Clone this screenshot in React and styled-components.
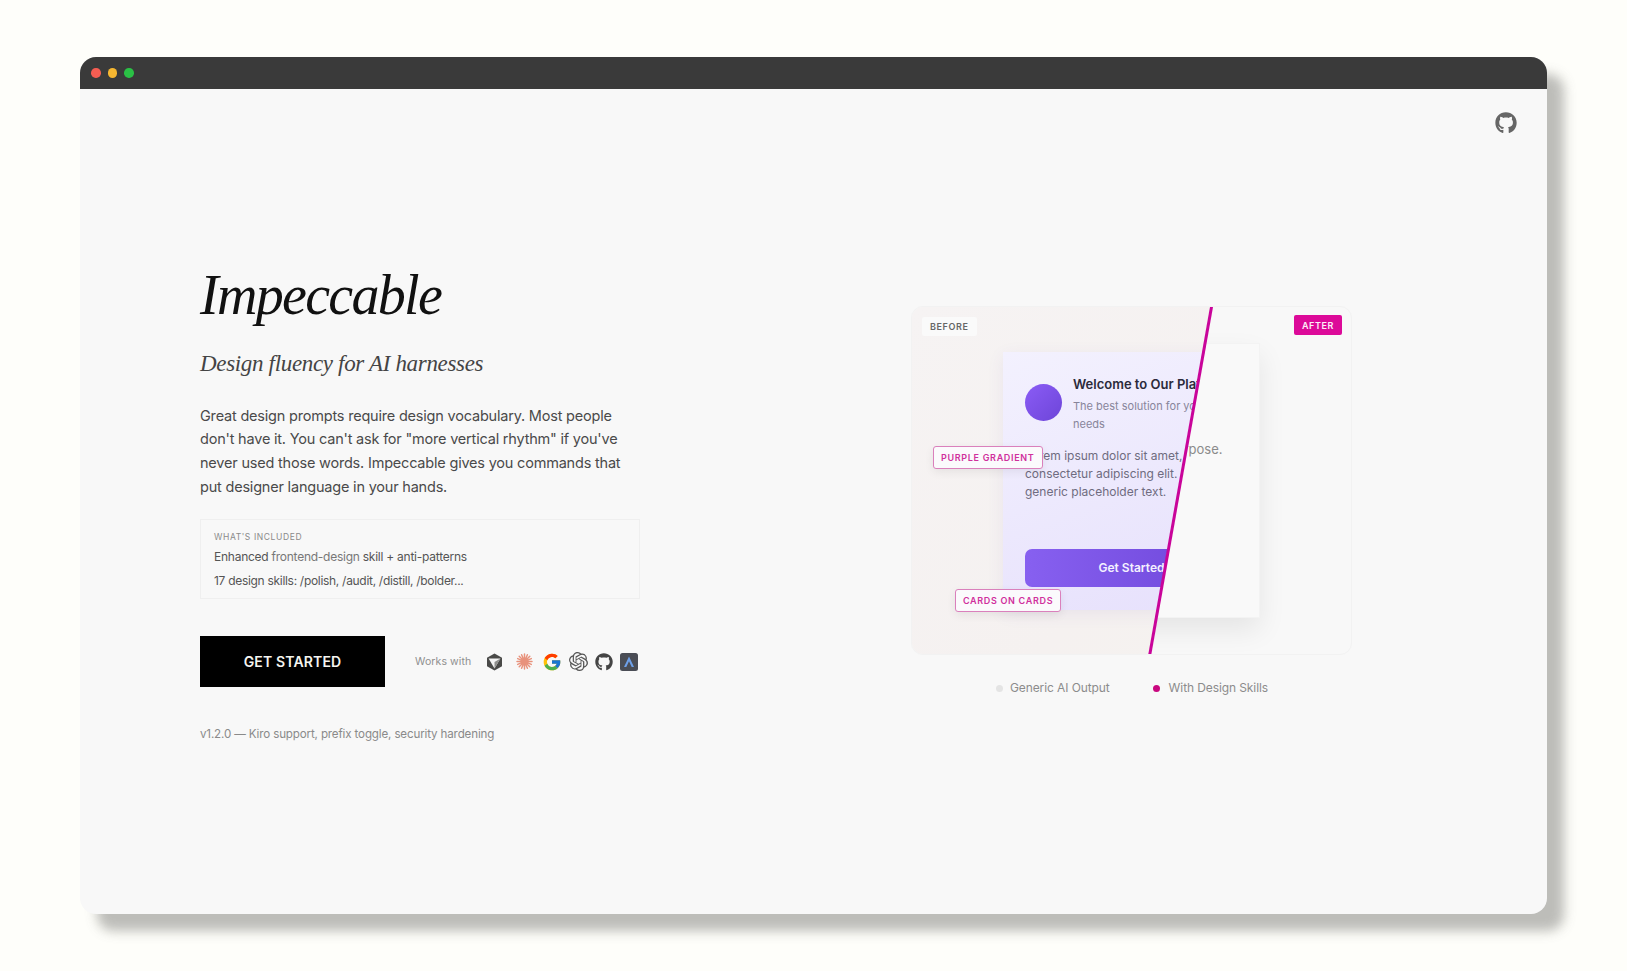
import React from "react";
import styled, { createGlobalStyle } from "styled-components";
import { FaGithub } from "react-icons/fa";
import { FcGoogle } from "react-icons/fc";
import { SiOpenai } from "react-icons/si";

const Global = createGlobalStyle`
  html, body {
    margin: 0;
    background: #fefefa;
  }
  * {
    box-sizing: border-box;
  }
`;

const Page = styled.div`
  padding: 57px 80px;
  min-height: 971px;
  overflow: hidden;
`;
const Window = styled.div`
  width: 1467px;
  height: 857px;
  border-radius: 16px;
  background: #f8f8f8;
  box-shadow: 17px 17px 12px rgba(100, 100, 95, 0.42);
  display: flex;
  flex-direction: column;
  position: relative;
`;
const TitleBar = styled.div`
  height: 32px;
  flex: none;
  background: #3a3a3a;
  border-radius: 16px 16px 0 0;
  display: flex;
  align-items: center;
  gap: 7px;
  padding-left: 11px;
`;
const Light = styled.span`
  width: 9.5px;
  height: 9.5px;
  border-radius: 50%;
  background: ${({ $color }) => $color};
`;
const GithubLink = styled.a`
  position: absolute;
  top: 55px;
  right: 30px;
  color: #666;
  font-size: 22px;
  line-height: 0;
`;
const Main = styled.main`
  flex: 1;
  display: flex;
  align-items: center;
  justify-content: space-between;
  padding: 0 195px 0 120px;
  font-family: Inter, sans-serif;
`;
const Intro = styled.section`
  width: 440px;
`;
const Title = styled.h1`
  margin: 0;
  font-family: "Liberation Serif", serif;
  font-style: italic;
  font-weight: 400;
  font-size: 56px;
  line-height: 70px;
  letter-spacing: -1.7px;
  color: #111;
`;
const Tagline = styled.h2`
  margin: 18px 0 0;
  font-family: "Liberation Serif", serif;
  font-style: italic;
  font-weight: 400;
  font-size: 23px;
  line-height: 32px;
  letter-spacing: -0.33px;
  color: #444;
`;
const Lead = styled.p`
  margin: 24px 0 0;
  font-size: 14.5px;
  line-height: 23.6px;
  letter-spacing: -0.2px;
  color: #4a4a4a;
`;
const Included = styled.div`
  margin-top: 21px;
  height: 80px;
  border: 1px solid #efefef;
  padding: 11px 13px;
`;
const IncludedLabel = styled.div`
  font-size: 8.5px;
  line-height: 12px;
  letter-spacing: 0.6px;
  color: #8a8a8a;
`;
const IncludedRow = styled.div`
  margin-top: ${({ $first }) => ($first ? "4px" : "5px")};
  font-size: 12px;
  line-height: 19px;
  letter-spacing: ${({ $first }) => ($first ? "-0.25px" : "-0.3px")};
  color: #555;
`;
const Code = styled.span`
  color: #777;
`;
const Actions = styled.div`
  margin-top: 37px;
  display: flex;
  align-items: center;
`;
const Cta = styled.button`
  width: 185px;
  height: 51px;
  flex: none;
  border: 0;
  background: #000;
  color: #f5f5f0;
  font-family: Inter, sans-serif;
  font-size: 14px;
  font-weight: 600;
  letter-spacing: 0.15px;
`;
const WorksWith = styled.span`
  margin-left: 30px;
  flex: none;
  white-space: nowrap;
  font-size: 10.5px;
  letter-spacing: 0.1px;
  color: #8f8f8f;
`;
const Harnesses = styled.div`
  margin-left: 15px;
  flex: none;
  display: flex;
  align-items: center;
  gap: 7px;
  line-height: 0;
`;
const Version = styled.p`
  margin: 38px 0 0;
  font-size: 11.6px;
  line-height: 18px;
  letter-spacing: -0.15px;
  color: #8a8a8a;
`;

const Showcase = styled.section`
  width: 441px;
`;
const Compare = styled.div`
  position: relative;
  height: 349px;
  border-radius: 12px;
  border: 1px solid #f2f2f2;
  background: #f8f8f8;
  overflow: hidden;
`;
const Layer = styled.div`
  position: absolute;
  inset: 0;
  display: flex;
  align-items: center;
  justify-content: center;
`;
const BeforeLayer = styled(Layer)`
  background: linear-gradient(135deg, #f6f3f3, #f5f1f0 60%, #f5f3ef);
  clip-path: polygon(0 0, 68% 0, 54% 100%, 0 100%);
`;
const AfterCard = styled.div`
  width: 256px;
  height: 275px;
  background: #f9f9f9;
  border: 1px solid #f3f3f3;
  box-shadow: 0 12px 26px rgba(0, 0, 0, 0.08);
  padding: 96px 6px 0;
  font-size: 13px;
  line-height: 18px;
  color: #8b8b8b;
  white-space: nowrap;
`;
const BeforeCard = styled.div`
  width: 257px;
  height: 258px;
  background: linear-gradient(160deg, #f3f1fe, #e6e0fc);
  box-shadow: 0 4px 16px rgba(90, 70, 160, 0.08);
  padding: 33px 22px 0;
  display: flex;
  flex-direction: column;
`;
const CardHead = styled.div`
  display: flex;
  gap: 11px;
`;
const Avatar = styled.div`
  width: 37px;
  height: 37px;
  flex: none;
  margin-top: -1px;
  border-radius: 50%;
  background: linear-gradient(135deg, #8b5cf6, #6d45d8);
`;
const CardHeadText = styled.div`
  margin-top: -11px;
  flex: 1;
`;
const CardTitle = styled.div`
  font-size: 13px;
  font-weight: 600;
  line-height: 20px;
  color: #2b2a3a;
  white-space: nowrap;
`;
const CardSubtitle = styled.div`
  margin-top: 3px;
  font-size: 11px;
  line-height: 18.5px;
  color: #88859a;
`;
const CardBody = styled.div`
  margin-top: 13px;
  font-size: 12px;
  line-height: 18px;
  color: #6f6c80;
  white-space: nowrap;
`;
const CardButton = styled.div`
  margin-top: auto;
  margin-bottom: 23px;
  height: 38px;
  border-radius: 7px;
  background: linear-gradient(90deg, #8760f0, #6d45d8);
  color: #f4f1ff;
  font-size: 12px;
  font-weight: 600;
  display: flex;
  align-items: center;
  justify-content: center;
`;
const Divider = styled.div`
  position: absolute;
  top: -6px;
  left: 267px;
  width: 2.5px;
  height: 361px;
  background: #c9049a;
  transform: rotate(10.07deg);
`;
const Badge = styled.span`
  position: absolute;
  top: ${({ $top }) => $top}px;
  ${({ $after }) => ($after ? "right: 9px;" : "left: 10px;")}
  height: ${({ $after }) => ($after ? "20px" : "19px")};
  padding: 0 8px;
  border-radius: 2px;
  display: flex;
  align-items: center;
  font-size: 9px;
  font-weight: 600;
  letter-spacing: 0.6px;
  background: ${({ $after }) => ($after ? "#dc0a99" : "#fafafa")};
  color: ${({ $after }) => ($after ? "#fdf0f8" : "#666")};
`;
const Flag = styled.span`
  position: absolute;
  top: ${({ $top }) => $top}px;
  left: ${({ $left }) => $left}px;
  height: 23px;
  padding: 0 7px;
  border: 1px solid #da80bc;
  border-radius: 3px;
  background: #fbfafc;
  display: flex;
  align-items: center;
  font-size: 9px;
  font-weight: 600;
  letter-spacing: 0.68px;
  color: #d0309c;
  box-shadow: 0 3px 10px rgba(0, 0, 0, 0.07);
  white-space: nowrap;
`;
const Legend = styled.div`
  margin-top: 24px;
  padding-left: 1px;
  display: flex;
  justify-content: center;
  gap: 43px;
`;
const LegendItem = styled.div`
  display: flex;
  align-items: center;
  gap: ${({ $wide }) => ($wide ? "9px" : "7px")};
  font-size: 12px;
  line-height: 18px;
  letter-spacing: -0.1px;
  color: #8c8c8c;
`;
const Dot = styled.span`
  width: 7px;
  height: 7px;
  border-radius: 50%;
  background: ${({ $color }) => $color};
`;
const SparkSvg = styled.svg`
  margin: 0 2px 0 6px;
`;

const CubeIcon = () => (
  <svg width="17" height="18" viewBox="0 0 17 18">
    <path d="M8.5 0.5 16 4.8v8.4l-7.5 4.3L1 13.2V4.8z" fill="#4a4a48" />
    <path d="M2.6 5.4h11.8L8.5 15.6z" fill="#f4f4f4" />
    <path d="M8.5 9.1 14.4 5.4 8.5 15.6z" fill="#8f8f8d" />
  </svg>
);

const SparkIcon = () => (
  <SparkSvg width="17" height="17" viewBox="0 0 17 17" stroke="#e8927c" strokeWidth="1.5" strokeLinecap="round">
    <path d="M8.5 1v15M1 8.5h15M3.2 3.2l10.6 10.6M13.8 3.2 3.2 13.8M5.6 1.7l5.8 13.6M11.4 1.7 5.6 15.3M1.7 5.6l13.6 5.8M15.3 5.6 1.7 11.4" />
  </SparkSvg>
);

const ArchIcon = () => (
  <svg width="18" height="18" viewBox="0 0 18 18">
    <rect width="18" height="18" rx="2.5" fill="#4a4d55" />
    <path d="M9 3.5 14 14h-2.3L9 8.2 6.3 14H4z" fill="#6ea0e8" />
  </svg>
);

const App = () => (
  <Page>
    <Global />
    <Window>
      <TitleBar>
        <Light $color="#f45d52" />
        <Light $color="#f6b731" />
        <Light $color="#2ac045" />
      </TitleBar>
      <GithubLink href="#">
        <FaGithub />
      </GithubLink>
      <Main>
        <Intro>
          <Title>Impeccable</Title>
          <Tagline>Design fluency for AI harnesses</Tagline>
          <Lead>
            Great design prompts require design vocabulary. Most people
            don't have it. You can't ask for "more vertical rhythm" if you've
            never used those words. Impeccable gives you commands that
            put designer language in your hands.
          </Lead>
          <Included>
            <IncludedLabel>WHAT'S INCLUDED</IncludedLabel>
            <IncludedRow $first>
              Enhanced <Code>frontend-design</Code> skill + anti-patterns
            </IncludedRow>
            <IncludedRow>17 design skills: /polish, /audit, /distill, /bolder...</IncludedRow>
          </Included>
          <Actions>
            <Cta>GET STARTED</Cta>
            <WorksWith>Works with</WorksWith>
            <Harnesses>
              <CubeIcon />
              <SparkIcon />
              <FcGoogle size={20} />
              <SiOpenai size={19} color="#555" />
              <FaGithub size={18} color="#444" />
              <ArchIcon />
            </Harnesses>
          </Actions>
          <Version>v1.2.0 — Kiro support, prefix toggle, security hardening</Version>
        </Intro>
        <Showcase>
          <Compare>
            <Layer>
              <AfterCard>Each element has a clear purpose.</AfterCard>
            </Layer>
            <BeforeLayer>
              <BeforeCard>
                <CardHead>
                  <Avatar />
                  <CardHeadText>
                    <CardTitle>Welcome to Our Platform</CardTitle>
                    <CardSubtitle>The best solution for your<br />needs</CardSubtitle>
                  </CardHeadText>
                </CardHead>
                <CardBody>
                  Lorem ipsum dolor sit amet,<br />
                  consectetur adipiscing elit.<br />
                  generic placeholder text.
                </CardBody>
                <CardButton>Get Started</CardButton>
              </BeforeCard>
            </BeforeLayer>
            <Divider />
            <Badge $top={10}>BEFORE</Badge>
            <Badge $top={8} $after>AFTER</Badge>
            <Flag $top={139} $left={21}>PURPLE GRADIENT</Flag>
            <Flag $top={282} $left={43}>CARDS ON CARDS</Flag>
          </Compare>
          <Legend>
            <LegendItem><Dot $color="#e4e4e4" />Generic AI Output</LegendItem>
            <LegendItem $wide><Dot $color="#c9087f" />With Design Skills</LegendItem>
          </Legend>
        </Showcase>
      </Main>
    </Window>
  </Page>
);

export default App;
